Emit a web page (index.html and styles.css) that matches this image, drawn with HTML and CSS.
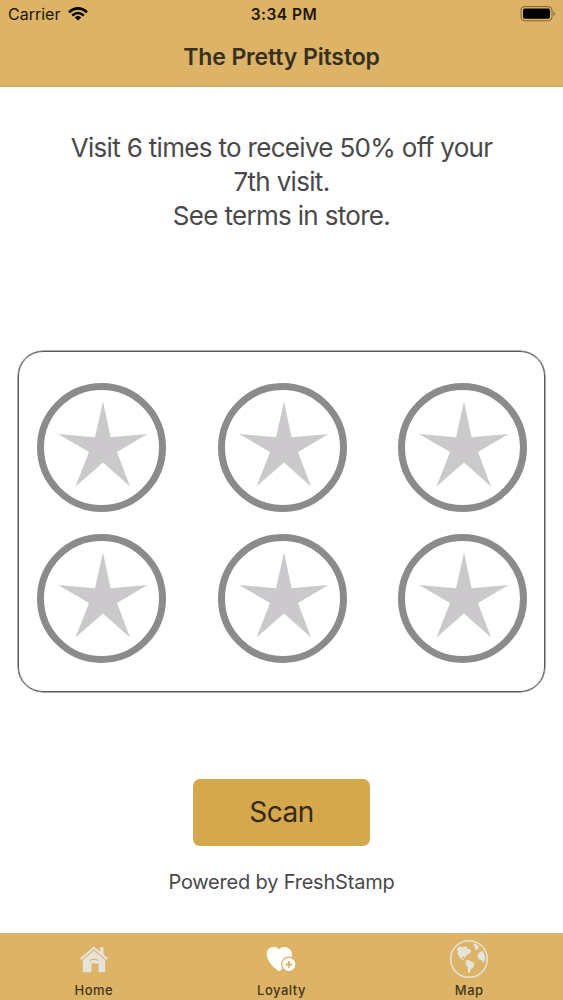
FILE: index.html
```html
<!DOCTYPE html>
<html lang="en">
<head>
    <meta charset="UTF-8">
    <meta name="viewport" content="width=device-width, initial-scale=1.0">
    <title>The Pretty Pitstop</title>
    <link rel="stylesheet" href="styles.css">
</head>
<body>
    <svg width="0" height="0" class="defs">
        <symbol id="stamp" viewBox="0 0 129 129">
            <circle cx="64.5" cy="64.5" r="61" fill="#fff" stroke="#8c8a8b" stroke-width="7"/>
            <path fill="#cbc9cc" d="M66 18.5 73.6 54.2 110.5 51 80 69 93 103.5 66 79.5 38.5 103.5 52 69 21 51 58 54.2Z"/>
        </symbol>
    </svg>

    <header class="header">
        <div class="status-bar">
            <div class="carrier">
                <span>Carrier</span>
                <svg width="20" height="14" viewBox="0 0 20 14" fill="none" stroke="#000" stroke-width="2.5">
                    <path d="M1 5.2Q10-2.4 19 5.2"/>
                    <path d="M4.2 8.5Q10 3.6 15.8 8.5"/>
                    <path d="M10 13.6 6.8 10.4Q10 7.7 13.2 10.4Z" fill="#000" stroke="none"/>
                </svg>
            </div>
            <div class="time">3:34 PM</div>
            <svg class="battery" width="36" height="16" viewBox="0 0 36 16">
                <rect x="1" y=".6" width="31" height="14.2" rx="3.6" fill="none" stroke="#756338" stroke-width="1"/>
                <rect x="3" y="2.6" width="27" height="10.2" rx="1.8"/>
                <path d="M33.6 5.2Q36 7.7 33.6 10.2Z" fill="#756338"/>
            </svg>
        </div>
        <h1>The Pretty Pitstop</h1>
    </header>

    <main class="content">
        <p class="offer">Visit 6 times to receive 50% off your<br>7th visit.<br>See terms in store.</p>

        <div class="card">
            <svg class="stamp"><use href="#stamp"/></svg>
            <svg class="stamp"><use href="#stamp"/></svg>
            <svg class="stamp"><use href="#stamp"/></svg>
            <svg class="stamp"><use href="#stamp"/></svg>
            <svg class="stamp"><use href="#stamp"/></svg>
            <svg class="stamp"><use href="#stamp"/></svg>
        </div>

        <button class="scan">Scan</button>
        <p class="powered">Powered by FreshStamp</p>
    </main>

    <nav class="tabs">
        <a class="tab">
            <svg width="40" height="40" viewBox="0 0 40 40">
                <path fill="#e8e3da" fill-rule="evenodd" d="M8.8 20.2 31.2 20.2V33.3H24.5V24.5H17.5V33.3H8.8Z"/>
                <path fill="#e8e3da" d="M10 20 20 11 30 20V22H10Z"/>
                <path fill="none" stroke="#dcb367" stroke-width="1" d="M8 21 20 11.2 32 21"/>
                <path fill="none" stroke="#e8e3da" stroke-width="2.2" d="M6.7 20.2 20 8.9 33.3 20.2"/>
                <path fill="#e8e3da" d="M26 8.3H29.5V17.2L26 14.3Z"/>
                <path fill="none" stroke="#dcb367" stroke-width="1.2" d="M16 21.6Q20 18.6 24 21.6"/>
            </svg>
            <span>Home</span>
        </a>
        <a class="tab active">
            <svg width="40" height="40" viewBox="0 0 40 40">
                <path fill="#fff" d="M18 10.4C15 6.6 8.2 7.3 6.2 12 3.9 20 10.7 26.9 17.2 31.7Q18.4 32.5 19.6 31.3C26.5 26.5 33 19.5 30.4 12.6 28.1 7.2 21 6.6 18 10.4Z"/>
                <circle cx="27.8" cy="25.4" r="7.2" fill="#fff" stroke="#dcb367" stroke-width="1.3"/>
                <path fill="none" stroke="#dcb367" stroke-width="2" d="M27.8 22.1V28.7M24.5 25.4H31.1"/>
            </svg>
            <span>Loyalty</span>
        </a>
        <a class="tab">
            <svg width="40" height="40" viewBox="0 0 40 40" fill="#e8e3da">
                <circle cx="20" cy="20" r="18.3" fill="none" stroke="#e8e3da" stroke-width="1.5"/>
                <path d="M8 9.5 11 7.5 14 8.2 16.5 7.2 18.5 8.8 17.3 10.2 20.3 9.8 22.3 12.2 20.2 14.8 17.5 16 16.5 18.7 14.5 17.5 12.7 18.3 14.6 20.4 16.3 21.4 14.5 21.5 11.4 19.3 8.8 15.7 8.8 12.5Z"/>
                <path d="M17 21.5 20 20.9 22.5 22.6 25.6 24.1 24.2 28.3 21.7 30.5 20.6 34 19.1 33.8 18.8 28.2 16.4 25Z"/>
                <path d="M23.8 4.3 27.3 5.3 30.1 8 28.6 10.2 26.7 11.3 26 8.5Z"/>
                <path d="M30.3 13.3 33.2 11.8 35.3 15.2 36.4 19.4 34.8 23.6 32.2 21.1 29.4 20 28.4 16.6Z"/>
            </svg>
            <span>Map</span>
        </a>
    </nav>
</body>
</html>
```
FILE: styles.css
```css
* {
    box-sizing: border-box;
}
body {
    margin: 0;
    height: 1000px;
    display: flex;
    flex-direction: column;
    font-family: Inter, "Liberation Sans", sans-serif;
    background-color: #fff;
    color: #4a484b;
    overflow: hidden;
}
svg {
    display: block;
}
.defs {
    position: absolute;
}
.header {
    height: 87px;
    background-color: #dcb367;
    border-bottom: 1px solid #c9aa70;
}
.status-bar {
    display: grid;
    grid-template-columns: 1fr auto 1fr;
    align-items: center;
    height: 28px;
    padding: 0 7px 0 8px;
    font-size: 16px;
    color: #1d160b;
}
.carrier {
    display: flex;
    align-items: center;
    gap: 8px;
}
.time {
    font-weight: 600;
    font-size: 15.5px;
    letter-spacing: 0.5px;
    padding-left: 4px;
}
.battery {
    justify-self: end;
}
h1 {
    margin: 14px 0 0;
    text-align: center;
    font-size: 23px;
    line-height: 30px;
    letter-spacing: -0.12px;
    font-weight: 600;
    color: #37301f;
}
.content {
    flex: 1;
    display: flex;
    flex-direction: column;
    align-items: center;
}
.offer {
    margin: 44px 0 0;
    font-size: 26px;
    line-height: 34px;
    letter-spacing: -0.68px;
    text-align: center;
}
.card {
    display: grid;
    grid-template-columns: repeat(3, 129px);
    justify-content: space-between;
    align-content: start;
    row-gap: 22px;
    width: 527px;
    height: 341px;
    margin-top: 118px;
    padding: 30.5px 17px 0 18px;
    border: 1px solid #5c5a5b;
    border-radius: 25px;
    box-shadow: 0 0 0 0.5px #5c5a5b;
}
.stamp {
    width: 129px;
    height: 129px;
}
.scan {
    width: 177px;
    height: 67px;
    margin-top: 86.5px;
    padding: 0;
    border: none;
    border-radius: 7px;
    background-color: #d5a84d;
    color: #332a18;
    font-family: inherit;
    font-size: 28px;
    letter-spacing: -0.5px;
}
.powered {
    margin: 23px 0 0;
    font-size: 20px;
    line-height: 26px;
    letter-spacing: -0.2px;
}
.tabs {
    display: grid;
    grid-template-columns: repeat(3, 1fr);
    height: 67px;
    background-color: #dcb367;
}
.tab {
    display: flex;
    flex-direction: column;
    align-items: center;
    padding-top: 6px;
    font-size: 13px;
    font-weight: 500;
    line-height: 16px;
    letter-spacing: 0.5px;
    color: #433718;
}
.tab span {
    margin-top: 3px;
}
```
